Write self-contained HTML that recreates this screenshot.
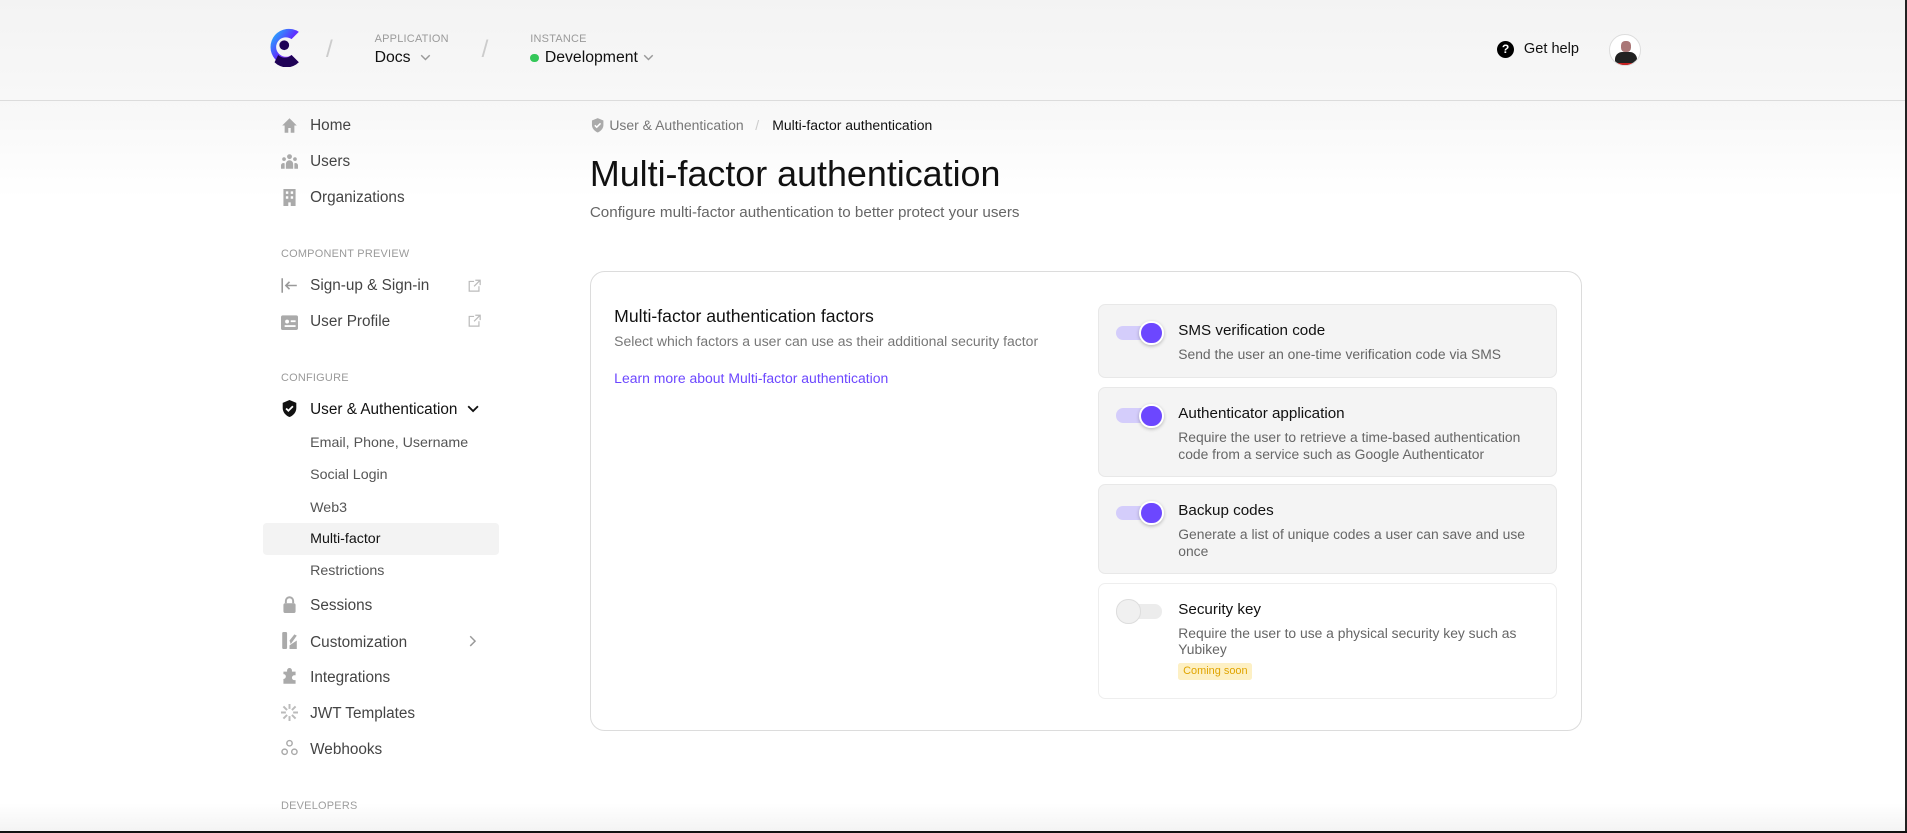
<!DOCTYPE html>
<html><head><meta charset="utf-8"><style>
html{zoom:1.21620}
*{box-sizing:border-box;margin:0;padding:0}
body{width:1568px;height:685px;overflow:hidden;font-family:"Liberation Sans",sans-serif;background:#fff;position:relative;color:#111}
.hdr{position:absolute;left:0;top:0;width:1568px;height:83px;background:linear-gradient(#f3f3f3,#f8f8f8);border-bottom:1px solid #dcdcdc}
.bodybg{position:absolute;left:0;top:83px;width:1568px;height:80px;background:linear-gradient(#f7f7f7,#fff)}
.a{position:absolute;white-space:nowrap}
.lbl{font-size:9px;color:#9a9a9a;letter-spacing:.2px}
.nav{font-size:12.6px;color:#444}
.sub{font-size:11.7px;color:#555}
.ico{position:absolute;left:231px;width:14px;height:14px}
.fc{position:absolute;left:903px;width:377px;background:#f4f4f4;border:1px solid #e8e8e8;border-radius:6px}
.fc .t{position:absolute;left:65px;top:14px;font-size:12.5px;color:#111}
.fc .d{position:absolute;left:65px;top:34px;font-size:11.4px;color:#666;line-height:13.5px;width:300px;white-space:normal}
.tg{position:absolute;left:14px;top:13px;width:40px;height:19px}
.tg .tr{position:absolute;left:0;top:4px;width:38px;height:12px;border-radius:6px;background:#d4cdfb}
.tg .kn{position:absolute;left:19px;top:0;width:20px;height:20px;border-radius:50%;background:#6c47ff;border:2px solid #fff;box-shadow:0 1px 3px rgba(0,0,0,.25)}
</style></head><body>
<div class="hdr"></div>
<div class="bodybg"></div>
<svg class="a" style="left:219px;top:22px" width="30" height="33" viewBox="0 0 30 33">
<defs><linearGradient id="g" x1="0" y1="0" x2="1" y2="1"><stop offset="0" stop-color="#17ccfc"/><stop offset=".5" stop-color="#5d31ff"/><stop offset="1" stop-color="#f35aff"/></linearGradient></defs>
<path d="M27 4 A15 15 0 1 0 27 29 L21 23 A8 8 0 1 1 21 10 Z" fill="url(#g)"/>
<circle cx="15" cy="15" r="4" fill="#1f0256"/>
<path d="M7 29 A14 14 0 0 0 27 29 L21 23 A8 8 0 0 1 10 23 Z" fill="#1f0256"/>
</svg>
<div class="a" style="left:268px;top:30px;font-size:20px;color:#ccc">/</div>
<div class="a lbl" style="left:308px;top:27px">APPLICATION</div>
<div class="a" style="left:308px;top:40px;font-size:13px;font-weight:500">Docs</div>
<svg class="a" style="left:345px;top:44px" width="9" height="6"><path d="M1 1l3.5 3.5L8 1" stroke="#999" fill="none" stroke-width="1.2"/></svg>
<div class="a" style="left:396px;top:30px;font-size:20px;color:#ccc">/</div>
<div class="a lbl" style="left:436px;top:27px">INSTANCE</div>
<div class="a" style="left:436px;top:44px;width:7px;height:7px;border-radius:50%;background:#34c759"></div>
<div class="a" style="left:448px;top:40px;font-size:13px;font-weight:500">Development</div>
<svg class="a" style="left:529px;top:44px" width="9" height="6"><path d="M1 1l3.5 3.5L8 1" stroke="#999" fill="none" stroke-width="1.2"/></svg>
<div class="a" style="left:1231px;top:34px;width:14px;height:14px;border-radius:50%;background:#000;color:#fff;font-size:10px;font-weight:bold;text-align:center;line-height:14px">?</div>
<div class="a" style="left:1253px;top:34px;font-size:12px">Get help</div>
<div class="a" style="left:1323px;top:28px;width:26px;height:26px;border-radius:50%;background:#fff;border:1px solid #ddd;overflow:hidden">
<div style="position:absolute;left:9px;top:5px;width:8px;height:9px;border-radius:40%;background:#a77"></div>
<div style="position:absolute;left:4px;top:14px;width:18px;height:12px;border-radius:6px 6px 0 0;background:#222;border-bottom:4px solid #c22"></div></div>

<svg class="ico" style="top:96px" viewBox="0 0 14 14"><path d="M7 1L1 7h2v6h3v-4h2v4h3V7h2z" fill="#aaa"/></svg>
<div class="a nav" style="left:255px;top:96px">Home</div>
<svg class="ico" style="top:126px" viewBox="0 0 14 14"><circle cx="7" cy="3" r="2" fill="#aaa"/><circle cx="2.5" cy="5" r="1.5" fill="#aaa"/><circle cx="11.5" cy="5" r="1.5" fill="#aaa"/><path d="M4 13v-4a3 3 0 016 0v4zM0 13v-3a2 2 0 013-1.5V13zM14 13v-3a2 2 0 00-3-1.5V13z" fill="#aaa"/></svg>
<div class="a nav" style="left:255px;top:126px">Users</div>
<svg class="ico" style="top:155px" viewBox="0 0 14 14"><path d="M2 0h10v14H8v-3H6v3H2z M4 2v2h2V2zm4 0v2h2V2zM4 6v2h2V6zm4 0v2h2V6z" fill="#aaa" fill-rule="evenodd"/></svg>
<div class="a nav" style="left:255px;top:155px">Organizations</div>
<div class="a lbl" style="left:231px;top:204px">COMPONENT PREVIEW</div>
<svg class="ico" style="top:228px" viewBox="0 0 14 14"><path d="M1 1v12M13 7H4M7 4L4 7l3 3" stroke="#999" fill="none" stroke-width="1.3"/></svg>
<div class="a nav" style="left:255px;top:228px">Sign-up &amp; Sign-in</div>
<svg class="a" style="left:385px;top:229px" width="11" height="11"><path d="M5 2H1v8h8V6M6 1h4v4M10 1L5 6" stroke="#bbb" fill="none"/></svg>
<svg class="ico" style="top:257px" viewBox="0 0 14 14"><rect x="0" y="2" width="14" height="12" rx="1.5" fill="#aaa"/><circle cx="5" cy="7" r="1.6" fill="#fff"/><rect x="8" y="6" width="4" height="1.5" fill="#fff"/><rect x="3" y="10" width="9" height="1.5" fill="#fff"/></svg>
<div class="a nav" style="left:255px;top:257px">User Profile</div>
<svg class="a" style="left:385px;top:258px" width="11" height="11"><path d="M5 2H1v8h8V6M6 1h4v4M10 1L5 6" stroke="#bbb" fill="none"/></svg>
<div class="a lbl" style="left:231px;top:306px">CONFIGURE</div>
<svg class="ico" style="top:329px" viewBox="0 0 14 15"><path d="M7 0l6 2.5v4.5c0 4-3 6.8-6 8-3-1.2-6-4-6-8V2.5z" fill="#111"/><path d="M4 7.5l2 2 4-4" stroke="#fff" stroke-width="1.6" fill="none"/></svg>
<div class="a nav" style="left:255px;top:330px;color:#111;font-weight:500">User &amp; Authentication</div>
<svg class="a" style="left:384px;top:333px" width="10" height="7"><path d="M1 1l4 4 4-4" stroke="#111" fill="none" stroke-width="1.5"/></svg>
<div class="a sub" style="left:255px;top:358px">Email, Phone, Username</div>
<div class="a sub" style="left:255px;top:384px">Social Login</div>
<div class="a sub" style="left:255px;top:411px">Web3</div>
<div class="a" style="left:216px;top:430px;width:194px;height:26px;background:#f3f3f3;border-radius:3px"></div>
<div class="a sub" style="left:255px;top:437px;color:#111">Multi-factor</div>
<div class="a sub" style="left:255px;top:463px">Restrictions</div>
<svg class="ico" style="top:490px" viewBox="0 0 14 14"><path d="M4 6V4a3 3 0 016 0v2" stroke="#aaa" stroke-width="1.6" fill="none"/><rect x="2" y="6" width="10" height="8" rx="1.5" fill="#aaa"/></svg>
<div class="a nav" style="left:255px;top:491px">Sessions</div>
<svg class="ico" style="top:520px" viewBox="0 0 14 14"><rect x="1" y="0" width="4" height="14" rx="1" fill="#aaa"/><path d="M7 7l4-5 2 1-5 7zM7 11l6-4v7H7z" fill="#aaa"/></svg>
<div class="a nav" style="left:255px;top:521px">Customization</div>
<svg class="a" style="left:386px;top:522px" width="6" height="10"><path d="M1 1l4 4-4 4" stroke="#999" fill="none" stroke-width="1.2"/></svg>
<svg class="ico" style="top:549px" viewBox="0 0 14 14"><path d="M5 2a2 2 0 014 0v1h3v3h-1a2 2 0 000 4h1v3H2V9a2 2 0 000-4V3h3z" fill="#aaa"/></svg>
<div class="a nav" style="left:255px;top:550px">Integrations</div>
<svg class="ico" style="top:579px" viewBox="0 0 14 14"><g stroke="#bbb" stroke-width="1.6"><path d="M7 0v4M7 10v4M0 7h4M10 7h4M2 2l3 3M9 9l3 3M12 2L9 5M5 9l-3 3"/></g></svg>
<div class="a nav" style="left:255px;top:580px">JWT Templates</div>
<svg class="ico" style="top:608px" viewBox="0 0 14 14"><g stroke="#aaa" fill="none" stroke-width="1.2"><circle cx="7" cy="3.5" r="2.2"/><circle cx="3" cy="10.5" r="2.2"/><circle cx="11" cy="10.5" r="2.2"/></g></svg>
<div class="a nav" style="left:255px;top:609px">Webhooks</div>
<div class="a lbl" style="left:231px;top:658px">DEVELOPERS</div>

<svg class="a" style="left:486px;top:97px" width="11" height="12" viewBox="0 0 14 15"><path d="M7 0l6 2.5v4.5c0 4-3 6.8-6 8-3-1.2-6-4-6-8V2.5z" fill="#aaa"/><path d="M4 7.5l2 2 4-4" stroke="#fff" stroke-width="1.6" fill="none"/></svg>
<div class="a" style="left:501px;top:96px;font-size:11.5px;color:#777">User &amp; Authentication</div>
<div class="a" style="left:621px;top:96px;font-size:11.5px;color:#ccc">/</div>
<div class="a" style="left:635px;top:96px;font-size:11.5px;color:#111">Multi-factor authentication</div>
<div class="a" style="left:485px;top:127px;font-size:29.5px;color:#111">Multi-factor authentication</div>
<div class="a" style="left:485px;top:168px;font-size:12.5px;color:#666">Configure multi-factor authentication to better protect your users</div>

<div class="a" style="left:485px;top:223px;width:816px;height:378px;border:1px solid #dcdcdc;border-radius:12px"></div>
<div class="a" style="left:505px;top:252px;font-size:14.5px;color:#111">Multi-factor authentication factors</div>
<div class="a" style="left:505px;top:274px;font-size:11.5px;color:#777">Select which factors a user can use as their additional security factor</div>
<div class="a" style="left:505px;top:304px;font-size:11.5px;color:#6c47ff">Learn more about Multi-factor authentication</div>

<div class="fc" style="top:250px;height:61px"><div class="tg"><div class="tr"></div><div class="kn"></div></div><div class="t">SMS verification code</div><div class="d">Send the user an one-time verification code via SMS</div></div>
<div class="fc" style="top:318px;height:74px"><div class="tg"><div class="tr"></div><div class="kn"></div></div><div class="t">Authenticator application</div><div class="d">Require the user to retrieve a time-based authentication code from a service such as Google Authenticator</div></div>
<div class="fc" style="top:398px;height:74px"><div class="tg"><div class="tr"></div><div class="kn"></div></div><div class="t">Backup codes</div><div class="d">Generate a list of unique codes a user can save and use once</div></div>
<div class="fc" style="top:479px;height:96px;background:#fff;border-color:#eee"><div class="tg"><div class="tr" style="background:#ececec"></div><div class="kn" style="left:0;background:#f0f0f0;border:1.5px solid #ddd;box-shadow:none"></div></div><div class="t">Security key</div><div class="d">Require the user to use a physical security key such as Yubikey</div>
<div style="position:absolute;left:65px;top:65px;padding:1px 4px;background:#fdf0c4;color:#e0a400;font-size:9px;border-radius:2px;line-height:12px">Coming soon</div></div>

<div class="a" style="left:0;top:660px;width:1568px;height:25px;background:linear-gradient(rgba(255,255,255,0),rgba(235,235,235,.6))"></div>
<div class="a" style="left:1566px;top:0;width:2px;height:685px;background:#222"></div>
<div class="a" style="left:0;top:683px;width:1568px;height:2px;background:#111"></div>
</body></html>
